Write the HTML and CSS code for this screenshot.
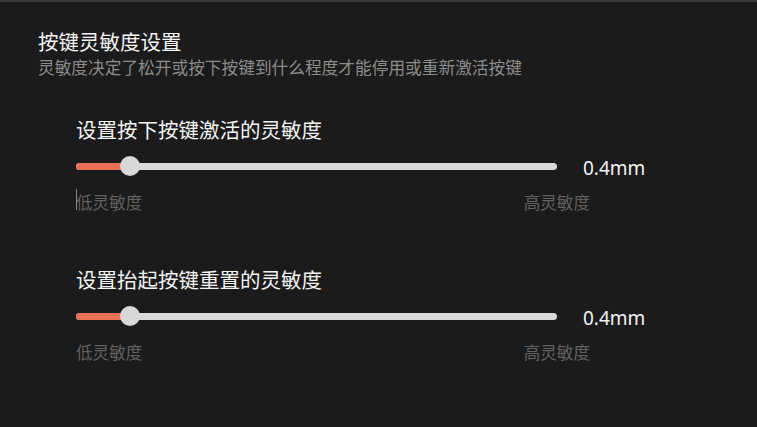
FILE: index.html
```html
<!DOCTYPE html>
<html lang="zh-CN">
<head>
<meta charset="utf-8">
<title>按键灵敏度设置</title>
<link rel="stylesheet" href="styles.css">
</head>
<body>
<div class="page">
  <h1 class="title">按键灵敏度设置</h1>
  <p class="subtitle">灵敏度决定了松开或按下按键到什么程度才能停用或重新激活按键</p>

  <section class="setting first">
    <h2 class="setting-title">设置按下按键激活的灵敏度</h2>
    <div class="slider-row">
      <div class="track">
        <div class="fill" style="width:54px"></div>
        <div class="thumb" style="left:44px"></div>
      </div>
      <span class="value">0.4mm</span>
    </div>
    <div class="labels">
      <span class="label"><span class="caret"></span>低灵敏度</span>
      <span class="label">高灵敏度</span>
    </div>
  </section>

  <section class="setting second">
    <h2 class="setting-title">设置抬起按键重置的灵敏度</h2>
    <div class="slider-row">
      <div class="track">
        <div class="fill" style="width:54px"></div>
        <div class="thumb" style="left:44px"></div>
      </div>
      <span class="value">0.4mm</span>
    </div>
    <div class="labels">
      <span class="label">低灵敏度</span>
      <span class="label">高灵敏度</span>
    </div>
  </section>
</div>
</body>
</html>
```

FILE: styles.css
```css
html, body {
  margin: 0;
  padding: 0;
  background: #1b1b1b;
  height: 100%;
}
body {
  font-family: "Noto Sans", "Noto Sans CJK SC", sans-serif;
  color: #f2f2f2;
  overflow: hidden;
}
.page {
  border-top: 2px solid #3a3a3a;
  padding: 28px 0 0 38px;
  min-height: 100%;
  box-sizing: border-box;
}
.title {
  margin: 0;
  font-size: 20.5px;
  line-height: 24px;
  font-weight: 400;
  color: #f4f4f4;
}
.subtitle {
  margin: 4px 0 0;
  font-size: 16.7px;
  line-height: 20px;
  color: #8c8c8c;
}
.setting {
  padding-left: 38px;
}
.setting.first {
  margin-top: 40px;
}
.setting.second {
  margin-top: 54px;
}
.setting-title {
  margin: 0;
  font-size: 20.5px;
  line-height: 24px;
  font-weight: 400;
  color: #f4f4f4;
}
.slider-row {
  display: flex;
  align-items: center;
  margin-top: 14px;
  height: 20px;
}
.track {
  position: relative;
  width: 481px;
  height: 7px;
  border-radius: 4px;
  background: #d9d9d9;
}
.fill {
  position: absolute;
  left: 0;
  top: 0;
  height: 100%;
  border-radius: 4px;
  background: #ea7058;
}
.thumb {
  position: absolute;
  top: 50%;
  width: 20px;
  height: 20px;
  margin-top: -10px;
  border-radius: 50%;
  background: #d8d8d8;
}
.value {
  margin-left: 26px;
  padding-top: 4px;
  font-size: 19px;
  line-height: 22px;
  color: #f4f4f4;
}
.labels {
  display: flex;
  justify-content: space-between;
  width: 514px;
  margin-top: 16px;
}
.label {
  position: relative;
  font-size: 16.6px;
  line-height: 22px;
  color: #616161;
}
.caret {
  position: absolute;
  left: 0;
  top: -3px;
  width: 1px;
  height: 21px;
  background: #8a8a8a;
}
```
